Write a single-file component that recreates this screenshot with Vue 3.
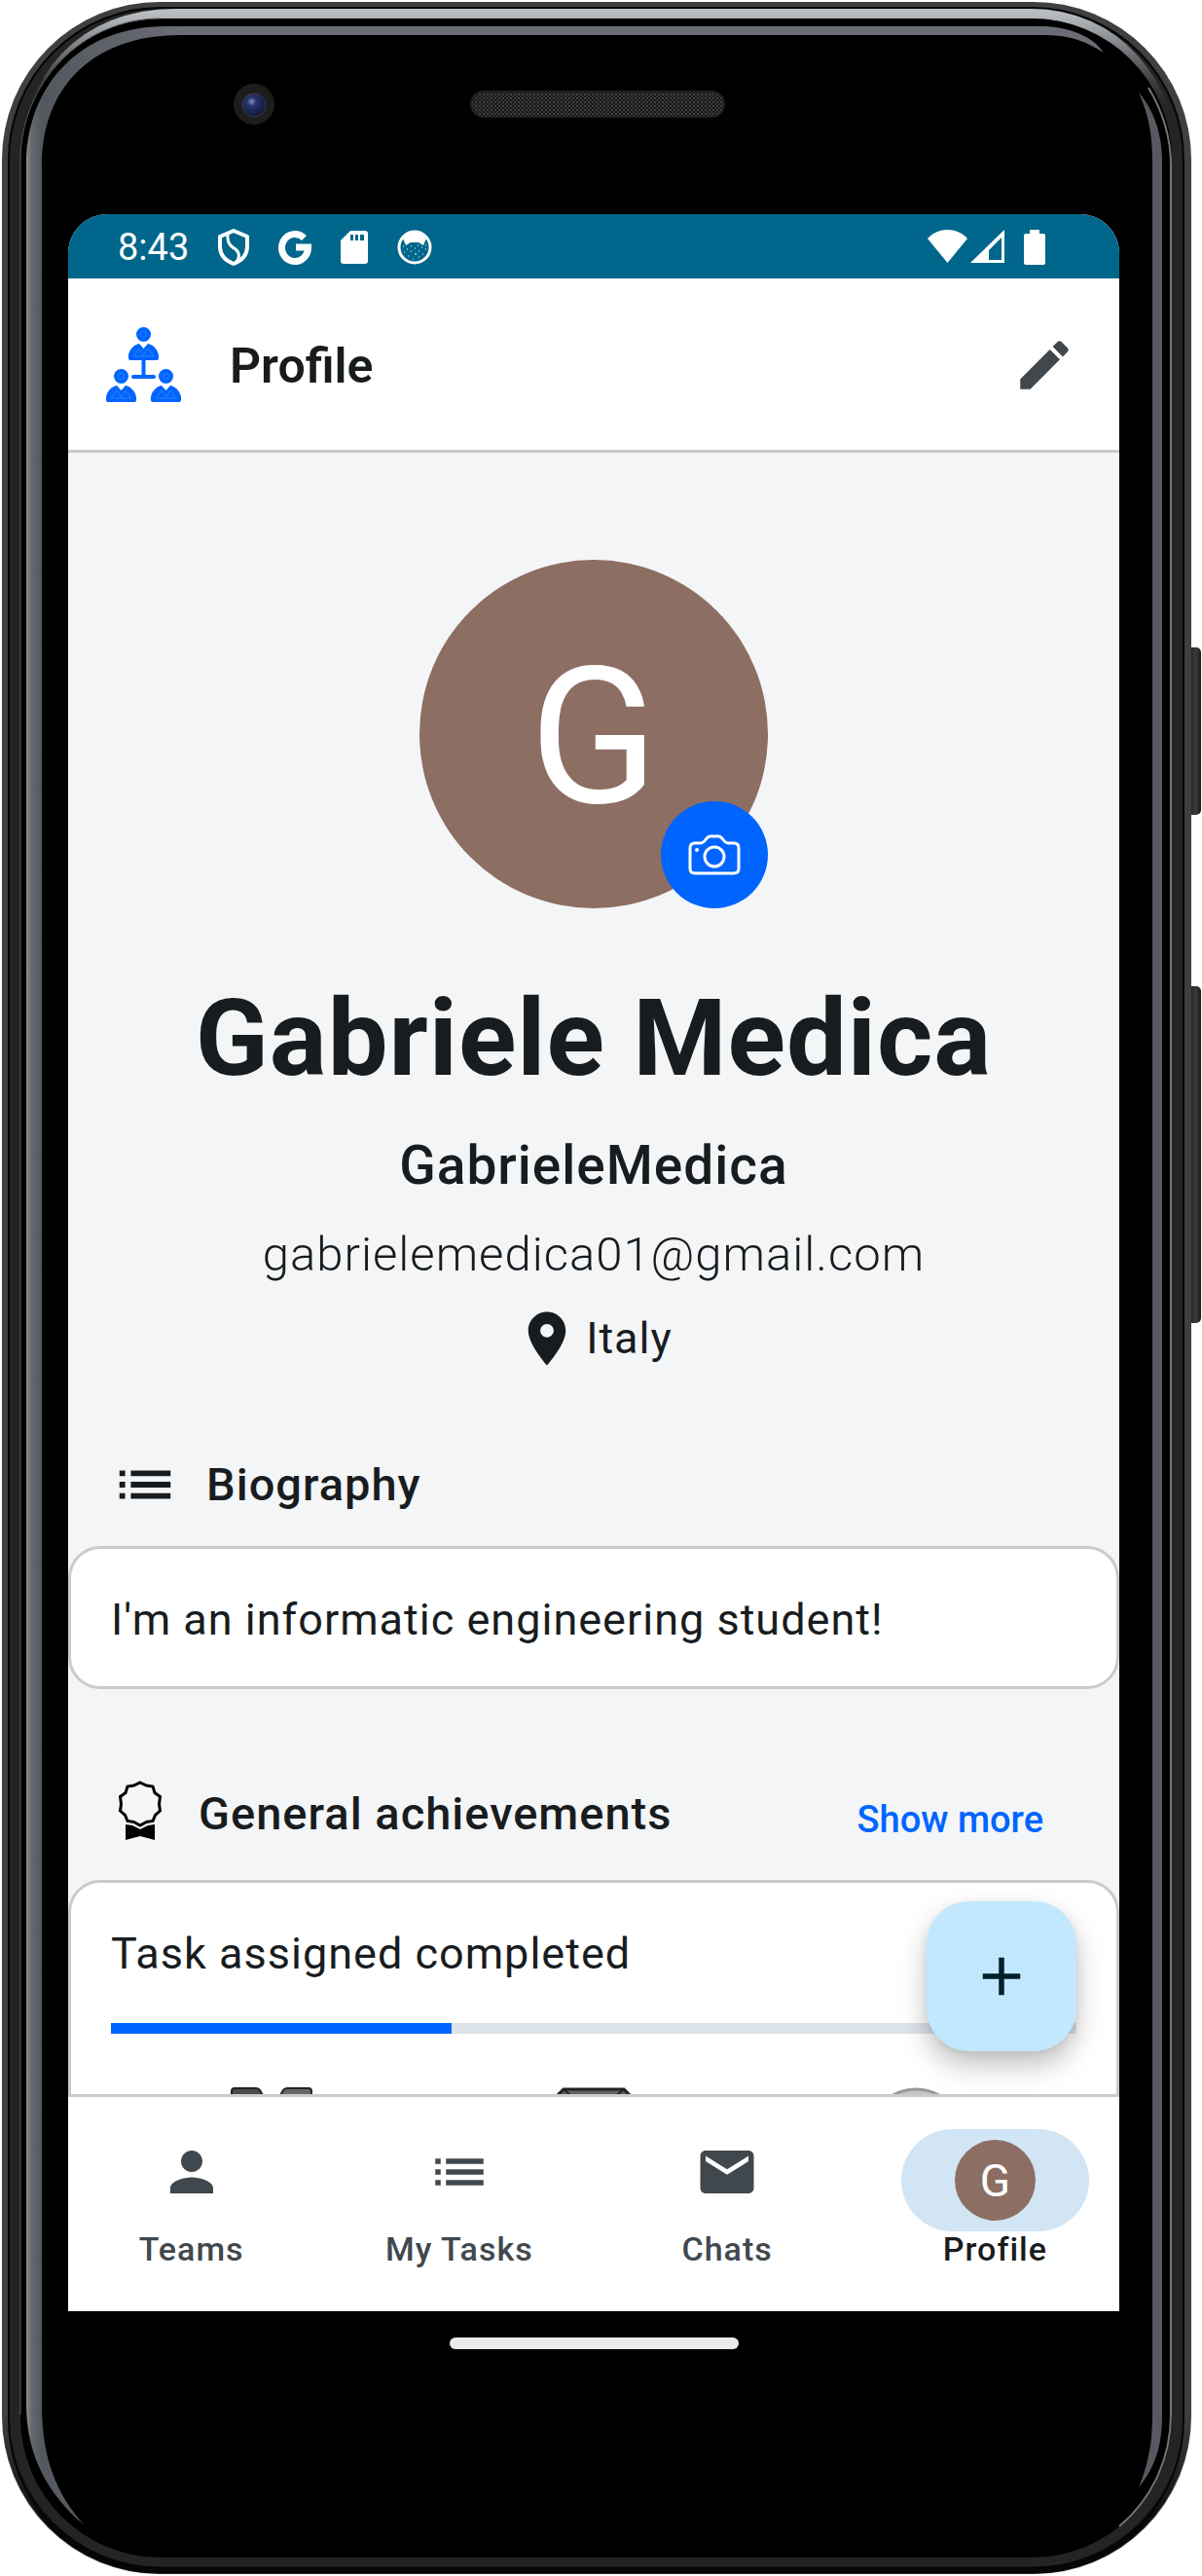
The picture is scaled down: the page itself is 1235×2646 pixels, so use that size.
<script setup>
const tabs = [
  { label: 'Teams', icon: 'person' },
  { label: 'My Tasks', icon: 'list' },
  { label: 'Chats', icon: 'mail' },
  { label: 'Profile', icon: 'avatar', active: true }
]

const icons = {
  person: 'M12 12c2.21 0 4-1.79 4-4s-1.79-4-4-4-4 1.79-4 4 1.79 4 4 4zm0 2c-2.67 0-8 1.34-8 4v2h16v-2c0-2.66-5.33-4-8-4z',
  list: 'M3 13h2v-2H3v2zm0 4h2v-2H3v2zm0-8h2V7H3v2zm4 4h14v-2H7v2zm0 4h14v-2H7v2zM7 7v2h14V7H7z',
  mail: 'M20 4H4c-1.1 0-1.99.9-1.99 2L2 18c0 1.1.9 2 2 2h16c1.1 0 2-.9 2-2V6c0-1.1-.9-2-2-2zm0 4l-8 5-8-5V6l8 5 8-5v2z',
  pin: 'M12 2C8.13 2 5 5.13 5 9c0 5.25 7 13 7 13s7-7.75 7-13c0-3.87-3.13-7-7-7zm0 9.5c-1.38 0-2.5-1.12-2.5-2.5s1.12-2.5 2.5-2.5 2.5 1.12 2.5 2.5-1.12 2.5-2.5 2.5z',
  edit: 'M3 17.25V21h3.75L17.81 9.94l-3.75-3.75L3 17.25zM20.71 7.04c.39-.39.39-1.02 0-1.41l-2.34-2.34c-.39-.39-1.02-.39-1.41 0l-1.83 1.83 3.75 3.75 1.83-1.83z',
  add: 'M19 13h-6v6h-2v-6H5v-2h6V5h2v6h6v2z'
}

const completed = 35.3
</script>

<template>
  <div class="phone">
    <svg class="frame" viewBox="0 0 1235 2646" preserveAspectRatio="none" aria-hidden="true">
      <defs>
        <linearGradient id="shine" x1="0" y1="14" x2="0" y2="120" gradientUnits="userSpaceOnUse">
          <stop offset="0" stop-color="#b9bcc1" />
          <stop offset="0.25" stop-color="#8b8e93" />
          <stop offset="0.6" stop-color="#45474a" />
          <stop offset="1" stop-color="#2a2a2a" stop-opacity="0" />
        </linearGradient>
        <linearGradient id="edge" x1="27" y1="0" x2="187" y2="0" gradientUnits="userSpaceOnUse">
          <stop offset="0" stop-color="#8c8d90" />
          <stop offset="0.035" stop-color="#65686f" />
          <stop offset="0.1" stop-color="#53575e" />
          <stop offset="1" stop-color="#6b6d75" />
        </linearGradient>
        <linearGradient id="base" x1="0" y1="2480" x2="0" y2="2600" gradientUnits="userSpaceOnUse">
          <stop offset="0" stop-color="#060606" stop-opacity="0" />
          <stop offset="1" stop-color="#060606" />
        </linearGradient>
        <linearGradient id="key" x1="0" y1="0" x2="1" y2="0">
          <stop offset="0" stop-color="#151515" />
          <stop offset="0.6" stop-color="#3c3c3c" />
          <stop offset="1" stop-color="#1a1a1a" />
        </linearGradient>
        <radialGradient id="lens" cx="0.4" cy="0.35" r="0.65">
          <stop offset="0" stop-color="#8390b8" />
          <stop offset="0.3" stop-color="#27346c" />
          <stop offset="1" stop-color="#10173a" />
        </radialGradient>
        <pattern id="mesh" width="4" height="4" patternUnits="userSpaceOnUse">
          <rect width="4" height="4" fill="#161616" />
          <rect width="2" height="2" fill="#424342" />
          <rect x="2" y="2" width="2" height="2" fill="#343534" />
        </pattern>
      </defs>
      <rect x="1220" y="665" width="14" height="172" rx="5" fill="url(#key)" />
      <rect x="1220" y="1013" width="14" height="346" rx="5" fill="url(#key)" />
      <rect x="2" y="2" width="1222" height="2642" rx="162" fill="#413f40" />
      <rect x="9" y="8" width="1207" height="2633" rx="156" fill="#242424" stroke="#050505" stroke-width="2" />
      <path d="M6 2480A158 160 0 0 0 165 2640H1060A158 160 0 0 0 1220 2480" fill="none" stroke="url(#base)" stroke-width="7" />
      <path d="M26 170C26 80 85 14 180 14H1060C1145 14 1206 85 1206 170" fill="none" stroke="url(#shine)" stroke-width="10" />
      <rect x="21" y="19" width="1183" height="2608" rx="144" fill="#000" />
      <path d="M21 2480V165C21 85 85 19 165 19" fill="none" stroke="#5a5a5a" stroke-width="1" />
      <path d="M1180 90C1195 115 1203 140 1203 170V2480C1203 2530 1180 2570 1150 2595" fill="none" stroke="#747474" stroke-width="2" />
      <path d="M86 2593C48 2562 27 2520 27 2470V170C27 85 85 27 170 27H1070C1095 27 1122 36 1134 54C1112 40 1095 36 1070 36H185C95 36 43 90 43 170V2470C43 2525 58 2562 86 2593Z" fill="url(#edge)" />
      <path d="M1170 95C1187 115 1194 140 1194 165V2480C1194 2515 1186 2535 1170 2555C1180 2530 1184 2510 1184 2480V165C1184 138 1180 118 1170 95Z" fill="#575960" />
      <circle cx="261" cy="107" r="21" fill="#1d1d1e" />
      <circle cx="261" cy="108" r="12" fill="url(#lens)" stroke="#3b3d48" />
      <rect x="484" y="94" width="260" height="26" rx="13" fill="url(#mesh)" stroke="#202020" stroke-width="2" />
    </svg>

    <div class="screen">
      <div class="status">
        <span class="clock">8:43</span>
        <svg width="32" height="38" viewBox="0 0 32 38">
          <path d="M16 2L30 8V18C30 27 24 33 16 36C8 33 2 27 2 18V8Z" fill="none" stroke="#fff" stroke-width="4" stroke-linejoin="round" />
          <path d="M10 5C9 15 13 18 18 21C23 25 22 31 18 35" fill="none" stroke="#fff" stroke-width="3" />
        </svg>
        <svg width="34" height="36" viewBox="0 0 34 36">
          <path d="M26.500 8.500A13.500 14 0 1 0 30.500 18H18" fill="none" stroke="#fff" stroke-width="7" />
        </svg>
        <svg width="28" height="34" viewBox="0 0 28 34">
          <path d="M10 0H25Q28 0 28 3V31Q28 34 25 34H3Q0 34 0 31V10Z" fill="#fff" />
          <path d="M10 4h3v6h-3zM15 4h3v6h-3zM20 4h4v6h-4z" fill="#00668b" />
        </svg>
        <svg width="36" height="36" viewBox="0 0 36 36">
          <circle cx="18" cy="18" r="16" fill="none" stroke="#fff" stroke-width="3" />
          <path d="M6 9C12 0 24 0 30 9L27 16L22 13H14L9 16Z" fill="#fff" />
          <path d="M6 17h1M10 20h1M7 23h1M14 17h1M14 22h1M11 27h1M18 19h1M21 16h1M18 25h2M22 22h1M25 18h1M29 20h1M26 25h1M22 28h1M16 30h1M29 16h1" stroke="#fff" stroke-width="1" />
        </svg>
        <div class="signals">
          <svg width="80" height="36" viewBox="0 0 80 36">
            <path d="M0 9C11-3 30-3 41 9L20.500 34Z" fill="#fff" />
            <path d="M79 0V34H44ZM76 8L63 21V31H76Z" fill="#fff" fill-rule="evenodd" />
          </svg>
          <svg width="22" height="36" viewBox="0 0 22 36">
            <path d="M6 0h10v4h4q2 0 2 2v28q0 2-2 2H2q-2 0-2-2V6q0-2 2-2h4z" fill="#fff" />
          </svg>
        </div>
      </div>

      <header class="topbar">
        <svg width="77" height="77" viewBox="0 0 77 77" aria-hidden="true">
          <defs>
            <g id="member">
              <circle cx="15.500" cy="7.500" r="7.500" fill="#0065ff" />
              <path d="M0 32C-1 25 5 18 11 17L15.500 22L20 17C26 18 32 25 31 32Q31 34 29 34H2Q0 34 0 32Z" fill="#0065ff" />
              <circle cx="15.500" cy="7.500" r="3" fill="none" stroke="#2f80ff" />
              <path d="M5 30L11 22L15.500 29L20 22L26 30Z" fill="none" stroke="#2f80ff" />
            </g>
          </defs>
          <path d="M38.500 34V51M28 51H49" fill="none" stroke="#0065ff" stroke-width="4" stroke-linecap="round" />
          <use href="#member" x="23" y="0" />
          <use href="#member" x="0" y="43" />
          <use href="#member" x="46" y="43" />
        </svg>
        <h1>Profile</h1>
        <button class="edit" aria-label="Edit profile">
          <svg width="66" height="66" viewBox="0 0 24 24"><path :d="icons.edit" fill="currentColor" /></svg>
        </button>
      </header>

      <div class="body">
        <main class="scroller">
          <section class="identity">
            <div class="avatar">
              <span>G</span>
              <button class="photo" aria-label="Change photo">
                <svg width="54" height="42" viewBox="0 0 54 42">
                  <path d="M7 9H13C18 9 18 2 23 2H31C36 2 36 9 41 9H47Q52 9 52 14V35Q52 40 47 40H7Q2 40 2 35V14Q2 9 7 9Z" fill="none" stroke="#fff" stroke-width="3" />
                  <circle cx="27" cy="23" r="10" fill="none" stroke="#fff" stroke-width="3" />
                  <circle cx="9" cy="16" r="2" fill="#fff" />
                </svg>
              </button>
            </div>
            <h2>Gabriele Medica</h2>
            <p class="username">GabrieleMedica</p>
            <p class="email">gabrielemedica01@gmail.com</p>
            <p class="place">
              <svg width="66" height="66" viewBox="0 0 24 24"><path :d="icons.pin" fill="currentColor" /></svg>
              <span>Italy</span>
            </p>
          </section>

          <section>
            <div class="heading">
              <svg width="70" height="70" viewBox="0 0 24 24"><path :d="icons.list" fill="currentColor" /></svg>
              <h3>Biography</h3>
            </div>
            <div class="card">
              <p>I'm an informatic engineering student!</p>
            </div>
          </section>

          <section class="achievements">
            <div class="heading">
              <svg width="62" height="70" viewBox="0 0 62 70">
                <path d="M30 3L36.500 6L43 7L45 13.500L50.500 17.500L49.500 25L50.500 32L45.500 36.500L43 42.500L36.500 43.500L30 47L23.500 43.500L17 42.500L14.500 36.500L9.500 32L10.500 25L9.500 17.500L15 13.500L17 7L23.500 6Z" fill="none" stroke="#000" stroke-width="3" />
                <path d="M15 46L22 47L30 51L38 47L45 46V62L30 58L15 62Z" fill="#000" />
              </svg>
              <h3>General achievements</h3>
              <a href="#achievements">Show more</a>
            </div>
            <div class="card">
              <p>Task assigned completed</p>
              <div class="track" role="progressbar" aria-label="Task assigned completed" :aria-valuenow="completed">
                <div class="fill" :style="{ width: completed + '%' }"></div>
              </div>
              <div class="trophies">
                <svg width="110" height="110" viewBox="0 0 110 110">
                  <path d="M17 1H39Q42 1 43 3L55 24V60H34L14 8V4Q14 1 17 1Z" fill="#4b4b4b" stroke="#222" stroke-width="2" />
                  <path d="M71 1H93Q96 1 96 4V8L76 60H55V24L67 3Q68 1 71 1Z" fill="#686868" stroke="#222" stroke-width="2" />
                  <circle cx="55" cy="76" r="32" fill="#777" stroke="#222" stroke-width="2" />
                </svg>
                <svg width="110" height="110" viewBox="0 0 110 110">
                  <path d="M24 2H86L98 14L56 106L12 14Z" fill="#606060" stroke="#222" stroke-width="3" />
                  <path d="M24 2L38 14L56 106L72 14L86 2M12 14H98" fill="none" stroke="#222" stroke-width="2" />
                </svg>
                <svg width="110" height="110" viewBox="0 0 110 110">
                  <circle cx="55" cy="50" r="48" fill="#c4c4c4" stroke="#999" stroke-width="3" />
                </svg>
              </div>
            </div>
          </section>
        </main>
        <button class="fab" aria-label="Add">
          <svg width="66" height="66" viewBox="0 0 24 24"><path :d="icons.add" fill="currentColor" /></svg>
        </button>
      </div>

      <nav class="tabs">
        <a v-for="tab in tabs" :key="tab.label" href="#" :class="{ active: tab.active }">
          <span class="pill">
            <span v-if="tab.icon === 'avatar'" class="mini">G</span>
            <svg v-else width="66" height="66" viewBox="0 0 24 24"><path :d="icons[tab.icon]" fill="currentColor" /></svg>
          </span>
          <span class="label">{{ tab.label }}</span>
        </a>
      </nav>
    </div>

    <div class="gesture"><span></span></div>
  </div>
</template>

<style>
body {
  margin: 0;
  background: #fff;
}
</style>

<style scoped>
* {
  box-sizing: border-box;
}

h1, h2, h3, p {
  margin: 0;
}

svg {
  display: block;
  flex: none;
}

button {
  display: flex;
  align-items: center;
  justify-content: center;
  padding: 0;
  border: 0;
  background: none;
  cursor: pointer;
}

a {
  text-decoration: none;
}

.phone {
  position: relative;
  display: flex;
  flex-direction: column;
  height: 100vh;
  padding: 220px 85px 0 70px;
  font-family: Roboto, "Liberation Sans", sans-serif;
  color: #191c1e;
}

.frame {
  position: absolute;
  inset: 0;
  width: 100%;
  height: 100%;
}

.screen {
  position: relative;
  display: flex;
  flex: 1;
  flex-direction: column;
  min-height: 0;
  overflow: hidden;
  border-radius: 40px 40px 0 0;
  background: #fff;
}

.status {
  display: flex;
  flex: none;
  align-items: center;
  gap: 30px;
  height: 66px;
  padding: 2px 76px 0 51px;
  background: #00668b;
  color: #fff;
}

.clock {
  font-size: 38px;
  line-height: 44px;
}

.signals {
  display: flex;
  gap: 19px;
  margin-left: auto;
}

.topbar {
  display: flex;
  flex: none;
  align-items: center;
  gap: 50px;
  padding: 50px 44px 49px 39px;
  border-bottom: 3px solid #cacaca;
}

h1 {
  padding-top: 2px;
  font-size: 50px;
  font-weight: 600;
  line-height: 66px;
}

.edit {
  margin-left: auto;
  color: #41484d;
}

.body {
  position: relative;
  flex: 1;
  min-height: 0;
  background: #f3f5f7;
}

.scroller {
  height: 100%;
  overflow-y: auto;
  scrollbar-width: none;
}

.identity {
  display: flex;
  flex-direction: column;
  align-items: center;
  padding: 110px 44px 82px;
}

.avatar {
  position: relative;
  display: flex;
  align-items: center;
  justify-content: center;
  width: 358px;
  height: 358px;
  padding-top: 6px;
  border-radius: 50%;
  background: #8d6e63;
  color: #fff;
  font-size: 194px;
}

.photo {
  position: absolute;
  right: 0;
  bottom: 0;
  width: 110px;
  height: 110px;
  border-radius: 50%;
  background: #0065ff;
}

h2 {
  margin-top: 70px;
  font-size: 110px;
  font-weight: 700;
  line-height: 128px;
  letter-spacing: 1px;
}

.username {
  margin-top: 33px;
  font-size: 55px;
  font-weight: 500;
  line-height: 66px;
  letter-spacing: 1px;
}

.email {
  margin-top: 28px;
  font-size: 49px;
  font-weight: 300;
  line-height: 62px;
  letter-spacing: 1px;
}

.place {
  display: flex;
  align-items: center;
  gap: 7px;
  margin-top: 22px;
  font-size: 45px;
  line-height: 66px;
  letter-spacing: 1px;
}

.heading {
  display: flex;
  align-items: center;
  gap: 28px;
  padding: 0 44px 28px;
}

.achievements {
  margin-top: 93px;
}

.achievements .heading {
  padding-bottom: 33px;
}

h3 {
  font-size: 47px;
  font-weight: 500;
  line-height: 66px;
  letter-spacing: 1px;
}

.heading a {
  margin-left: auto;
  padding: 12px 34px 0;
  color: #0065ff;
  font-size: 38px;
  font-weight: 500;
  line-height: 55px;
}

.card {
  padding: 40px 41px 35px;
  border: 3px solid #cacaca;
  border-radius: 33px;
  background: #fff;
}

.card p {
  font-size: 45px;
  line-height: 66px;
  letter-spacing: 1px;
}

.track {
  height: 11px;
  margin-top: 38px;
  background: #dce3e9;
}

.fill {
  height: 100%;
  background: #0065ff;
}

.trophies {
  display: flex;
  justify-content: space-around;
  margin-top: 55px;
}

.fab {
  position: absolute;
  right: 44px;
  bottom: 44px;
  width: 154px;
  height: 154px;
  border-radius: 44px;
  background: #c2e8ff;
  box-shadow: 0 14px 28px rgba(0, 0, 0, 0.25), 0 2px 8px rgba(0, 0, 0, 0.06);
  color: #001f2a;
}

.tabs {
  display: flex;
  flex: none;
  gap: 22px;
  padding: 33px 1px 46px 0;
  border-top: 3px solid #cacaca;
}

.tabs a {
  display: flex;
  flex: 1;
  flex-direction: column;
  align-items: center;
  color: #41484d;
}

.pill {
  display: flex;
  align-items: flex-start;
  justify-content: center;
  width: 193px;
  height: 105px;
  padding-top: 11px;
  border-radius: 53px;
}

.tabs .active {
  color: #191c1e;
}

.active .pill {
  background: #d2e5f4;
}

.mini {
  display: flex;
  align-items: center;
  justify-content: center;
  width: 83px;
  height: 83px;
  border-radius: 50%;
  background: #8d6e63;
  color: #fff;
  font-size: 46px;
}

.label {
  font-size: 34px;
  font-weight: 500;
  line-height: 36px;
  letter-spacing: 1px;
}

.gesture {
  position: relative;
  display: flex;
  flex: none;
  align-items: flex-start;
  justify-content: center;
  height: 272px;
  padding-top: 27px;
}

.gesture span {
  width: 297px;
  height: 12px;
  border-radius: 6px;
  background: #ebebeb;
}
</style>
